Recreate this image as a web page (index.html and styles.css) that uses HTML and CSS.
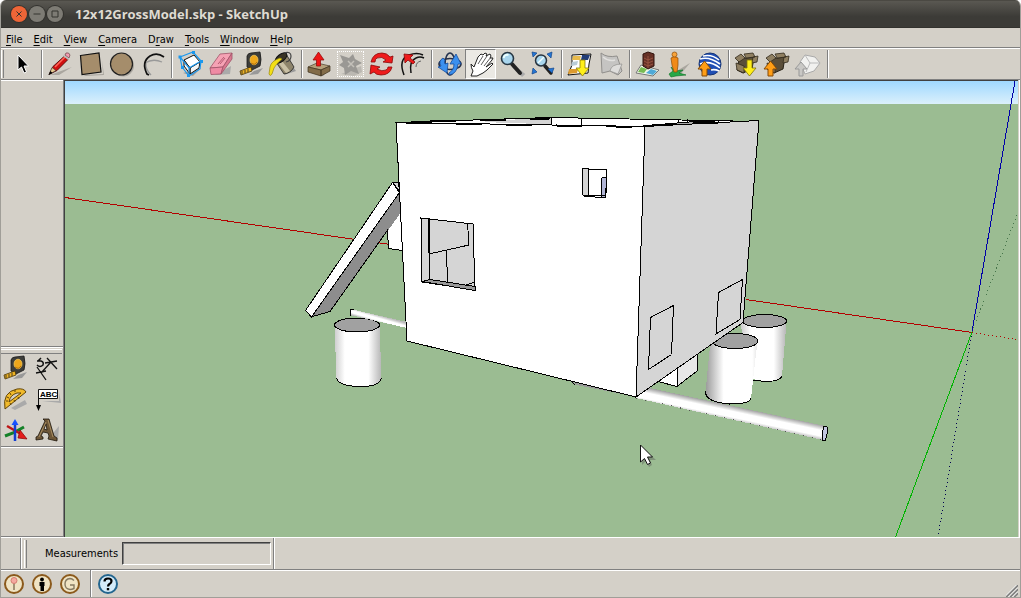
FILE: index.html
```html
<!DOCTYPE html>
<html lang="en">
<head>
<meta charset="utf-8">
<title>12x12GrossModel.skp - SketchUp</title>
<link rel="stylesheet" href="styles.css">
</head>
<body>
<div class="window">
<header class="titlebar">
  <button class="winbtn close" aria-label="Close"><svg width="16" height="16" viewBox="0 0 16 16"><path d="M5.500 5.500l5 5M10.500 5.500l-5 5"/></svg></button>
  <button class="winbtn" aria-label="Minimize"><svg width="16" height="16" viewBox="0 0 16 16"><path d="M4.500 8h7"/></svg></button>
  <button class="winbtn" aria-label="Maximize"><svg width="16" height="16" viewBox="0 0 16 16"><path d="M5 5h6v6H5z"/></svg></button>
  <h1 class="title">12x12GrossModel.skp - SketchUp</h1>
</header>
<nav class="menubar">
  <button><u>F</u>ile</button><button><u>E</u>dit</button><button><u>V</u>iew</button><button><u>C</u>amera</button><button>D<u>r</u>aw</button><button><u>T</u>ools</button><button><u>W</u>indow</button><button><u>H</u>elp</button>
</nav>
<div class="toolbar">
  <span class="grip"></span>
  <button class="tool" aria-label="Select"><svg viewBox="7 49 31 30"><path d="M18 55v15l3.500-3 2.500 6 2.500-1-2.500-6h4.500z" fill="#000" stroke="#fff"/></svg></button>
  <span class="sep"></span>
  <button class="tool" aria-label="Line"><svg viewBox="44 49 31 30"><path d="M50 75l22-8-13 8z" fill="#aaa69f"/><path d="M49 74.500l4-8 11-10 4 3-11 11z" fill="#d01010" stroke="#400" stroke-width=".8"/><path d="M55 67l10-10" stroke="#ff6a5c" stroke-width="1.500"/><path d="M49 74.500l3-7 4 3z" fill="#e8c890" stroke="#333" stroke-width=".6"/><path d="M48.500 75l2-4 2 2z"/><path d="M65 55l1-2q3-1 4 2l-1 3z" fill="#f29bb0" stroke="#644" stroke-width=".7"/><path d="M63.500 55.500l5 4" stroke="#bbb" stroke-width="1.500"/></svg></button>
  <button class="tool" aria-label="Rectangle"><svg viewBox="44 49 31 30"><path d="M52 75l20-1-1-14 2 15-18 1z" fill="#aaa69f"/><path d="M49.500 55.500l18.500-2.500 2 19-19 2.500z" fill="#a58d6b" stroke="#111" stroke-width="1.200"/></svg></button>
  <button class="tool" aria-label="Circle"><svg viewBox="44 49 31 30"><circle cx="61" cy="65.500" r="11" fill="#aaa69f"/><circle cx="59.500" cy="64" r="11" fill="#a58d6b" stroke="#222" stroke-width="1.200"/></svg></button>
  <button class="tool" aria-label="Arc"><svg viewBox="44 49 31 30"><path d="M52 63q8-5 17-1M53 63q-1 6 5 12" fill="none" stroke="#999" stroke-width="1.300"/><path d="M71 57q-7-5-14-1-9 6-3 18l2 1" fill="none" stroke="#111" stroke-width="1.700"/></svg></button>
  <span class="sep"></span>
  <button class="tool" aria-label="Make component"><svg viewBox="174 49 31 30"><path d="M183 73l18-5-8 8z" fill="#999"/><path d="M184 60l10-5 6 7-10 6z" fill="#fff" stroke="#111"/><path d="M184 60l6 8v6l-6-8zM190 68l10-6-1 6-9 6z" fill="#f5f5f5" stroke="#111"/><path d="M180 57l13-5 8 9-1 8-11 7-7-9zM180 57l9 11 12-7M189 68v8" fill="none" stroke="#1c98ee" stroke-width="1.200"/><path d="M178.500 55.500h3v3h-3zM192 51h3v3h-3zM200 60h3v3h-3zM187 74h3v3h-3zM181 66h3v3h-3z" fill="#1c98ee"/></svg></button>
  <button class="tool" aria-label="Eraser"><svg viewBox="174 49 31 30"><path d="M184 75l15-1 1-8z" fill="#aaa"/><path d="M179 68l10-14 12-1-9 14z" fill="#f5a2b4" stroke="#a05468" stroke-width=".8"/><path d="M179 68l13-1-2 7-10 .5z" fill="#ef8ba4" stroke="#a05468" stroke-width=".8"/><path d="M192 67l9-14v6l-11 15z" fill="#da7890" stroke="#a05468" stroke-width=".8"/><path d="M187 64l6-7M189 64l5-6" stroke="#b75a72"/></svg></button>
  <button class="tool" aria-label="Tape measure"><svg viewBox="174 49 31 30"><g id="tape"><path d="M192 71l9-3-5 6-9 1z" fill="#999"/><path d="M185 67V56q1-3 4-3l9-1q2 8 0 14l-8 4z" fill="#3d3d3a" stroke="#191919" stroke-width=".8"/><ellipse cx="192" cy="60" rx="4" ry="4.800" fill="#eda61b" stroke="#f5cf62" stroke-width=".7"/><path d="M189 63q4 3 6-1" stroke="#aa6a0a" fill="none"/><path d="M190 71l-11 4-1-4 11-4z" fill="#efb424" stroke="#473407" stroke-width=".8"/><path d="M180 71v3m3-4v3m3-4v3" stroke="#222" stroke-width=".8"/></g></svg></button>
  <button class="tool" aria-label="Paint bucket"><svg viewBox="174 49 31 30"><path d="M191 75l12-4-3-4z" fill="#999"/><path d="M183 62l10-8 8 13q-3 6-10 7z" fill="#8e846b" stroke="#222" stroke-width=".8"/><path d="M186 64l7 9 4-2-8-10z" fill="#c9c0a5"/><ellipse cx="188" cy="58" rx="7" ry="3.500" transform="rotate(-38 188 58)" fill="#393325" stroke="#111"/><path d="M191 53q7-2 7 3t-5 6" fill="none" stroke="#444" stroke-width="1.200"/><path d="M187 58q-9 3-10 9l-1 7q1 3 3 0l2-6q2-4 8-9z" fill="#f3df16" stroke="#9b8811" stroke-width=".7"/></svg></button>
  <span class="sep"></span>
  <button class="tool" aria-label="Push/Pull"><svg viewBox="304 49 31 30"><path d="M313 73l17-6-7 9z" fill="#999"/><path d="M308 67l9-4 13 3-9 4z" fill="#b4a17c" stroke="#4a3d29" stroke-width=".7"/><path d="M308 67l13 3v6l-13-4zM321 70l9-4v5l-9 5z" fill="#826c49" stroke="#3c301e" stroke-width=".7"/><path d="M316.500 66v-6h-3.500l5.500-8 5.500 8h-3.500v6z" fill="#ee1616" stroke="#8d0606" stroke-width=".7"/></svg></button>
  <button class="tool ghosted" aria-label="Move" disabled><svg viewBox="335 49 31 30"><path d="M341 74l20-8 1 6-8 4z" fill="#bbb8b2"/><path d="M340 55l9 3 4-4 2 5 7 4-6 3 3 8-8-3-6 4-1-7-5-3 4-3z" fill="#9a9894"/><path d="M348 61l6 6m0-6l-6 6" stroke="#c4c1ba" stroke-width="1.500"/></svg></button>
  <button class="tool" aria-label="Rotate"><svg viewBox="366 49 31 30"><path d="M371 62q2-9 11-9 5 0 8 4l3-1-1 7-9-1 3-2q-4-4-9-2-2 1-2 4z" fill="#ee1b1b" stroke="#8a0808" stroke-width=".8"/><path d="M392 67q-2 8-11 8-5 0-7-3l-4 2 1-9 9 2-3 2q5 3 9 1 2-1 2-3z" fill="#ee1b1b" stroke="#8a0808" stroke-width=".8"/></svg></button>
  <button class="tool" aria-label="Offset"><svg viewBox="397 49 31 30"><path d="M404 75q-6-16 5-20 8-3 14 0M411 73q-2-12 5-15 4-2 8 0" fill="none" stroke="#111" stroke-width="1.500"/><path d="M416 67q0-5 5-6" fill="none" stroke="#666"/><path d="M413 64l-5-4-3 3-1-9 9 1-3 3 5 4z" fill="#ee1b1b" stroke="#8a0808" stroke-width=".8"/></svg></button>
  <span class="sep"></span>
  <button class="tool" aria-label="Orbit"><svg viewBox="434 49 31 30"><ellipse cx="450" cy="64" rx="5" ry="11" fill="none" stroke="#25334e" stroke-width="1.600"/><ellipse cx="450" cy="64" rx="11" ry="5.500" fill="none" stroke="#273047" stroke-width="1.600"/><path d="M443 58q-5 3-2 8l-3 1 9 6 1-10-3 1q-1-2 0-4zM449 75q8-1 9-11h3l-5-10-6 10h4q0 6-5 9z" fill="#3c90ee" stroke="#174b9b" stroke-width=".8"/></svg></button>
  <button class="tool pressed" aria-label="Pan" aria-pressed="true"><svg viewBox="466 49 31 30"><path d="M472 76l2-5q-2-3-2-7l3 3 4-10 3-3 2 1 2-2 2 1-1 2 4-2 1 2-1 2 3 0-1 2-6 7 6-4 1 1-6 6-4 3-6 3z" fill="#fff" stroke="#222"/><path d="M484 56l-5 8m9-8l-6 9m10-8l-7 9" fill="none" stroke="#333" stroke-width=".8"/></svg></button>
  <button class="tool" aria-label="Zoom"><svg viewBox="496 49 31 30"><path d="M513 66l10 8-2 2" stroke="#aaa" stroke-width="3" fill="none"/><path d="M512 64l8 9" stroke="#222" stroke-width="4" stroke-linecap="round"/><circle cx="507.500" cy="58.500" r="6" fill="#a8d5ed" stroke="#273743" stroke-width="1.600"/><path d="M503.500 58q1-4 5-3" stroke="#eaffff" stroke-width="2" fill="none"/></svg></button>
  <button class="tool" aria-label="Zoom extents"><svg viewBox="527 49 31 30"><path d="M545 66l6 7" stroke="#222" stroke-width="3.500" stroke-linecap="round"/><circle cx="541" cy="60.500" r="5.500" fill="#a8d5ed" stroke="#27333f" stroke-width="1.500"/><path d="M538 63l6-6" stroke="#f3ffff" stroke-width="1.500"/><path d="M532 52l5 1-4 4zM552 52l-5 2 4 4zM532 74l1-6 4 4zM554 68l-6 1 4 4z" fill="#2475d4" stroke="#15468a" stroke-width=".7"/></svg></button>
  <span class="sep"></span>
  <button class="tool" aria-label="Get current view"><svg viewBox="564 49 31 30"><path d="M572 55l19-1-2 10-1 9-20 2 4-10z" fill="#fff" stroke="#111"/><path d="M573 56h8l-1 4h-8z" fill="#e8ba4c"/><path d="M582 55h8l-2 5h-7z" fill="#243e78"/><path d="M572 62l6-1-1 4-6 1z" fill="#b9cbd5"/><path d="M569 69h9l-1 4-9 1z" fill="#dc9a2f"/><path d="M580 60h5v8h4l-6.500 8-6.500-8h4z" fill="#ffef19" stroke="#8a7b07" stroke-width=".8"/></svg></button>
  <button class="tool" aria-label="Toggle terrain"><svg viewBox="595 49 31 30"><path d="M601 53q6 5 16 3l5 15-4 4-8-4-8 2z" fill="#c5c4c2" stroke="#918f8c"/><path d="M610 71q1-7 12-7l-4 10z" fill="#dedddb" stroke="#918f8c" stroke-width=".7"/><path d="M603 57q6 5 12 3" fill="none" stroke="#e2e1df" stroke-width="1.500"/></svg></button>
  <span class="sep"></span>
  <button class="tool" aria-label="Add new building"><svg viewBox="632 49 31 30"><path d="M636 73l5-8 18 5-6 6z" fill="#eef6e7" stroke="#777"/><path d="M638 72l3-5 6 2-3 4z" fill="#77bb51"/><path d="M646 73l5-4 6 2-4 4z" fill="#50a9d7"/><path d="M643 54l5-2 6 2v12l-6 3-5-3z" fill="#663126" stroke="#32140e"/><path d="M648 56v12m-4-10l4 2 5-2m-9 3l4 2 5-2m-9 3l4 2 5-2" fill="none" stroke="#a35a46" stroke-width=".8"/></svg></button>
  <button class="tool" aria-label="Photo textures"><svg viewBox="663 49 31 30"><path d="M675 72l15-9-10 12z" fill="#aaa69f"/><path d="M669 74l4-3-2-4 5 4 7-1-4 3 7 2-10 1-5 1z" fill="#27a847" stroke="#087021" stroke-width=".6"/><path d="M671 58q3-3 7 0v7l-1 7h-3l-2-7z" fill="#f08a18" stroke="#8d4a08" stroke-width=".7"/><circle cx="674.500" cy="54.500" r="2.500" fill="#f7a43c" stroke="#8d4a08" stroke-width=".7"/></svg></button>
  <button class="tool" aria-label="Preview in Google Earth"><svg viewBox="694 49 31 30"><circle cx="710" cy="64" r="11" fill="#204eb3" stroke="#173575"/><path d="M700 59q9-3 20 5M703 56q9-2 16 4M700 64q10-4 20 4M711 70q4-1 8 1" fill="none" stroke="#fff" stroke-width="1.600"/><path d="M702 76v-7h-4l6.500-8 6.500 8h-4v7z" fill="#ff9e16" stroke="#854b08"/></svg></button>
  <span class="sep"></span>
  <button class="tool" aria-label="Get models"><svg viewBox="731 49 31 30"><g id="box"><path d="M739 59l15-2-2 12-9 4-6-3z" fill="#5a4e39" stroke="#292317"/><path d="M735 58l6-4 4 4-6 4zM744 54l9-1 2 4-9 1zM753 57l5-1-1 6-5 1zM736 63l8 3v7l-7-3z" fill="#8f7f61" stroke="#312a1c" stroke-width=".8"/></g><path d="M747 60h5v8h4l-6.500 8-6.500-8h4z" fill="#ffee18" stroke="#81740a" stroke-width=".8"/></svg></button>
  <button class="tool" aria-label="Share model"><svg viewBox="731 49 31 30"><use href="#box"/><path d="M737 76v-7h-4l6.500-8 6.500 8h-4v7z" fill="#ff9e16" stroke="#854b08"/></svg></button>
  <button class="tool" aria-label="Share component"><svg viewBox="731 49 31 30"><path d="M738 62l5-7 10 2 5 6-6 8-9 3z" fill="#f1f1ef" stroke="#aaa"/><path d="M743 55l5 8 10 0M748 63l-4 9" fill="none" stroke="#bbb"/><path d="M737 76v-7h-4l6-7 6 7h-4v7z" fill="#c9c8c5" stroke="#999"/></svg></button>
  <span class="sep"></span>
</div>
<main class="workspace">
  <aside class="side">
    <div class="dock dock-top"></div>
    <div class="toolset">
      <button class="tool" aria-label="Tape measure tool"><svg viewBox="175 49 31 30"><use href="#tape"/></svg></button>
      <button class="tool" aria-label="Dimensions"><svg viewBox="32 353 31 30"><path d="M41 373l10-11M36 373l10-2M37 367l9 13M45 363l12-2M47 358l10 11" fill="none" stroke="#111" stroke-width="1.300"/><path d="M37 361h4q3 1 2 4-3 3-6 0M38 361l3-3" fill="none" stroke="#111" stroke-width="1.500"/></svg></button>
      <button class="tool" aria-label="Protractor"><svg viewBox="1 384 31 30"><path d="M11 408l14-8 2 4-12 6z" fill="#aaa"/><path fill-rule="evenodd" d="M5 409q-3-17 12-20 7-1 9 3zM9 402q1-7 8-9h4z" fill="#f1ba2b" stroke="#61450a"/><path d="M6 401h2m-1-4l2 1m1-5l1 2m4-5v2m-5 11l1 2m3-5l1 2m3-5l1 2" stroke="#61450a"/></svg></button>
      <button class="tool" aria-label="Text"><svg viewBox="32 384 31 30"><path d="M42 401h17v-9l2 11z" fill="#aaa"/><path d="M38.500 389.500h19v9h-19z" fill="#fff" stroke="#111"/><path d="M38.500 398v8" stroke="#111"/><path d="M36 405h5l-2.500 6z"/><text x="40" y="397" class="abc">ABC</text></svg></button>
      <button class="tool" aria-label="Axes"><svg viewBox="1 415 31 30"><path d="M5 436l8-3 11-6" stroke="#148128" stroke-width="3" fill="none"/><path d="M7 426l14 8" stroke="#bd1515" stroke-width="2.500"/><path d="M20 430l7 9-9-1z" fill="#e31c1c" stroke="#800" stroke-width=".7"/><path d="M15 441v-17" stroke="#143ed0" stroke-width="2.500"/><path d="M11.500 425l3.500-6 3.500 6z" fill="#1751ff"/></svg></button>
      <button class="tool" aria-label="3D text"><svg viewBox="32 415 31 30"><path d="M49 438l10-12-1 14z" fill="#aaa"/><path fill-rule="evenodd" d="M36 437l2-1 7-15-2-2h6l5 17 3 2v3l-9-2 1-3-1-3-5-1-2 4 2 1v2l-7 1zM44 429l3 1-1-6z" fill="#6d5637" stroke="#1e170d" stroke-width=".8"/><path d="M46 422l-7 15m9-17l5 17" stroke="#a78c61"/></svg></button>
    </div>
    <div class="dock dock-bottom"></div>
  </aside>
  <svg class="scene" viewBox="65 81 953 456" preserveAspectRatio="xMidYMid slice" role="img" aria-label="3D model of a house">
    <defs>
      <linearGradient id="sky" x2="0" y2="1"><stop offset="0" stop-color="#9fd8ff"/><stop offset="1" stop-color="#dbf0fb"/></linearGradient>
      <linearGradient id="drum"><stop offset="0" stop-color="#ccc"/><stop offset=".22" stop-color="#fff"/><stop offset=".72" stop-color="#fff"/><stop offset="1" stop-color="#b5b5b5"/></linearGradient>
      <linearGradient id="drum2"><stop offset="0" stop-color="#999"/><stop offset=".35" stop-color="#fff"/><stop offset=".9" stop-color="#fff"/><stop offset="1" stop-color="#e4e4e4"/></linearGradient>
      <linearGradient id="pipe" gradientUnits="userSpaceOnUse" x1="735" y1="406" x2="732" y2="420"><stop offset="0" stop-color="#999"/><stop offset=".4" stop-color="#fff"/><stop offset=".8" stop-color="#fff"/><stop offset="1" stop-color="#ccc"/></linearGradient>
      <linearGradient id="pipe2" gradientUnits="userSpaceOnUse" x1="378" y1="315" x2="376" y2="322"><stop offset="0" stop-color="#bbb"/><stop offset=".4" stop-color="#fff"/><stop offset=".7" stop-color="#fff"/><stop offset="1" stop-color="#bbb"/></linearGradient>
    </defs>
    <path d="M65 81h953v456H65z" fill="#9bbc92"/>
    <path d="M65 81h953v23H65z" fill="url(#sky)"/>
    <g fill="none" shape-rendering="crispEdges">
      <path d="M65 197.500L390 244.500M746 299.500l226 33" stroke="#b40000"/>
      <path d="M972 332.500l46 7" stroke="#b40000" stroke-dasharray="1 3"/>
      <path d="M972 332L1015 81" stroke="#0000a8"/>
      <path d="M972 332L938 537" stroke="#000050" stroke-dasharray="1 3"/>
      <path d="M972 332L895.500 537" stroke="#00b400"/>
      <path d="M972 332l46-120" stroke="#46744a" stroke-dasharray="1 3"/>
    </g>
    <g class="edges">
      <path d="M388 225l12-14 2 39-14-2z" fill="#fff" stroke="none"/><path d="M387.500 230l1 18.500 14 2" fill="none"/>
      <path d="M393 183l5-1 2 10z" fill="#d5d5d5"/>
      <path d="M399.500 192l1 21L330 311.500l-19.500 5.500z" fill="#8d8d8d" stroke="none"/>
      <path d="M388 229.500l-58 82-19.500 5.500" fill="none"/>
      <path d="M392.500 182.500l7 10-88 124.500-6-6.500z" fill="#fff"/>
      <path d="M334.500 325l2 53q2 8 22.500 8.500t22.500-8.500l-2-53z" fill="url(#drum)" stroke="none"/>
      <path d="M336.500 378q2 8 22.500 8.500t22.500-8.500" fill="none"/>
      <ellipse cx="357" cy="325" rx="22.500" ry="7" fill="#a1a1a1"/>
      <path d="M350 309l57 13v6l-57-13z" fill="url(#pipe2)" stroke="none"/><path d="M354 309.500h-3q-2 2 0 6" fill="none"/>
      <path d="M741 323l4 50q4 8 22 8 14 0 15-5l4.500-54z" fill="url(#drum)" stroke="none"/><path d="M752 380q27 4 30-4" fill="none"/>
      <ellipse cx="764.500" cy="321" rx="22" ry="6.500" fill="#a1a1a1"/>
      <path d="M656 381l21 5.500V360z" fill="#fff"/><path d="M677.500 386l19.500-15v-20l-19.500 12z" fill="#e7e7e7"/>
      <path d="M710.500 341l-5 51q-1 11 24 12 20 0 21.500-6l6.500-57z" fill="url(#drum2)" stroke="none"/><path d="M705.500 391q-1 11 24 13 21 0 21.500-6" fill="none"/>
      <ellipse cx="735" cy="341" rx="23" ry="7.500" fill="#a1a1a1"/>
      <path d="M645 387l180 39-2 14-187-42z" fill="url(#pipe)" stroke="none"/><path d="M636 398l187 42" fill="none" stroke="#555" stroke-dasharray="1 8"/>
      <path d="M824 426.500h3q1 9-2 14h-2q-1-9 1-14z" fill="#c3c7e0"/>
      <path d="M572 382l5 3 59 12z" fill="#999" stroke="none"/><path d="M572 382.500l3 2" fill="none"/>
      <path d="M396 122.500l155-5 208 4-114 5.500z" fill="#fff"/>
      <path d="M480 121l71-3v6l-50-1z" fill="#d5d5d5" stroke="none"/>
      <path d="M551.500 118v7M581.500 119v6M678.500 119v5M687.500 119v4" fill="none"/>
      <path d="M665 124l24-2 26-1-20 3z" fill="#aaa"/>
      <path d="M396 122.500l249 4-9 270.500-229-56z" fill="#fff"/>
      <path d="M645 126.500l114-6-16 202-107 74.500z" fill="#d5d5d5"/>
      <path d="M406 123l240 4M430 121.500l120-3M643 126l38-2 50-2" fill="none" stroke-width="2" stroke-dasharray="26 24"/>
      <path d="M421 218l52 6 2 66-53-8z" fill="#d5d5d5"/>
      <path d="M422 281.500l8-2 45 7v4z" fill="#999"/><path d="M465 285.500l10-3.500" fill="none"/>
      <path d="M429 219l1 61M429 254l40-9-1.500-22M446.500 250.500l1 32" fill="none"/><path d="M428.500 219v34" fill="none" stroke-width="2"/>
      <path d="M582.500 168.500l6 0 1 1h17v19l-1 9.500-22-2z" fill="#fff"/><path d="M582.500 168.500h6v27l-6-.5z" fill="#d5d5d5"/><path d="M601 179l2-2h3v11l-1 9h-4z" fill="#b1b5d6"/><path d="M583 195.500h22" fill="none"/>
      <path d="M650.500 317.500l23-12-2 49-23 15zM718.500 292.500l24-13-2.500 40-24 14.500z" fill="none"/>
    </g>
    <path d="M642 447v18l4-4 3 6 3-2-2-5h6z" fill="#555" opacity=".4"/>
    <path d="M640.500 445v17l4-3.500 3 6 3-1.500-3-6h5z" fill="#fff" stroke="#111"/>
  </svg>
</main>
<form class="measurebar">
  <span class="stub"></span>
  <div class="measure"><span class="grip"></span><label for="vcb">Measurements</label><input id="vcb" type="text"></div>
</form>
<footer class="statusbar">
  <button class="status" aria-label="Geo-location"><svg viewBox="0 0 22 22"><circle class="coin" cx="11" cy="11" r="9"/><path d="M11 10v7" stroke="#8a785d" stroke-width="1.500"/><circle cx="11" cy="7.500" r="3" fill="#f5aaa0" stroke="#d57f72"/></svg></button>
  <button class="status" aria-label="Credits"><svg viewBox="0 0 22 22"><circle class="coin" cx="11" cy="11" r="9"/><circle cx="11" cy="6.500" r="1.900"/><path d="M8.500 9h5v4H13v5H9.500v-5h-1z"/></svg></button>
  <button class="status" aria-label="Sign in"><svg viewBox="0 0 22 22"><circle class="coin" cx="11" cy="11" r="9"/><path d="M15 7.500q-2-2-4-2-5 .5-5 5.500t5 5.500q2 0 4-1V12h-4" fill="none" stroke="#857a62" stroke-width="1.400"/></svg></button>
  <span class="sep"></span>
  <button class="status" aria-label="Help"><svg viewBox="0 0 22 22"><circle cx="11" cy="11" r="9" fill="#d5ecfa" stroke="#23658e" stroke-width="2"/><path d="M7.500 8.500q0-3 3.500-3t3.500 2.500q0 2-2 3-1.500 1-1.500 2.500" fill="none" stroke="#000" stroke-width="2.200"/><path d="M9.800 15h2.400v2.300H9.800z"/></svg></button>
  <svg class="resize" viewBox="0 0 12 12"><path d="M0 12L12 0M4 12l8-8M8 12l4-4" stroke="#808080" stroke-width="2"/><path d="M-1.500 12L12-1.500M2.500 12L12 2.500M6.500 12L12 6.500" stroke="#fff"/></svg>
</footer>
</div>
</body>
</html>
```
FILE: styles.css
```css
* { box-sizing: border-box; }
body { margin: 0; background: #fff; color: #000; font: 11px/15px "DejaVu Sans Condensed", "Liberation Sans", sans-serif; }
button { margin: 0; padding: 0; border: 0; background: none; font: inherit; color: inherit; }
svg { display: block; }
.window { display: flex; flex-direction: column; height: 100vh; background: #d4d0c8; border: 1px solid #a09e98; border-top: 0; border-radius: 6px 6px 0 0; overflow: hidden; }
.titlebar { display: flex; align-items: center; gap: 2px; height: 28px; flex: none; padding: 0 10px; background: linear-gradient(#5a5852, #3c3b37 60%); border-top: 1px solid #4b4943; border-bottom: 1px solid #33322e; }
.winbtn { width: 16px; height: 16px; border-radius: 50%; background: #7d7b74; box-shadow: 0 0 0 1px #33322e; }
.winbtn svg { fill: none; stroke: #35342f; stroke-width: 1; }
.winbtn.close { background: #ee6537; }
.title { margin: 0 0 0 10px; font: bold 13px/18px "Open Sans", "Noto Sans", sans-serif; color: #dfdbd2; white-space: nowrap; }
.menubar { display: flex; align-items: center; gap: 11px; height: 20px; flex: none; padding: 3px 5px 0; border-bottom: 1px solid #808080; }
.menubar u { text-underline-offset: 2px; }
.toolbar { display: flex; align-items: center; height: 32px; flex: none; border-top: 1px solid #fff; border-bottom: 1px solid #808080; }
.grip { flex: none; width: 3px; height: 28px; margin-right: 3px; border-left: 1px solid #fff; border-right: 1px solid #808080; }
.tool { flex: none; width: 31px; height: 30px; }
.tool svg { width: 31px; height: 30px; }
.tool.pressed { background: #ebe9e4; border: 1px solid; border-color: #808080 #fff #fff #808080; }
.tool.pressed svg { margin: -1px; }
.tool.ghosted svg { outline: 1px dotted #fff; outline-offset: -3px; }
.sep { flex: none; width: 6px; height: 28px; background: linear-gradient(90deg, transparent 3px, #808080 3px, #808080 4px, #fff 4px, #fff 5px, transparent 5px); }
.workspace { display: flex; flex: 1; min-height: 0; padding-right: 1px; border-right: 1px solid #fff; }
.side { display: flex; flex-direction: column; flex: none; width: 63px; border-right: 1px solid #808080; }
.dock { border-top: 1px solid #fff; border-bottom: 1px solid #808080; }
.dock-top { flex: 3 1 0; }
.dock-bottom { flex: 1 1 0; }
.toolset { display: grid; grid-template-columns: 31px 31px; grid-template-rows: 5px; grid-auto-rows: 31px; border-top: 1px solid #fff; border-bottom: 1px solid #808080; }
.toolset::before { content: ""; grid-column: 1 / -1; height: 3px; margin: 1px 1px 1px 0; border-top: 1px solid #fff; border-bottom: 1px solid #808080; }
.abc { font: bold 8px/8px "Liberation Sans", sans-serif; }
.scene { flex: 1; min-width: 0; height: 100%; border-left: 1px solid #404040; border-top: 1px solid #404040; }
.edges { stroke: #000; stroke-width: 1; shape-rendering: crispEdges; }
.measurebar { display: flex; flex: none; height: 33px; border-top: 1px solid #fff; border-bottom: 1px solid #808080; }
.stub { width: 20px; border-right: 1px solid #808080; }
.measure { display: flex; align-items: center; padding: 0 2px; border-left: 1px solid #fff; border-right: 1px solid #808080; box-shadow: 1px 0 #fff; }
.measure label { margin: 0 4px 0 15px; }
.measure input { width: 149px; height: 23px; padding: 2px; font: inherit; background: #d4d0c8; border: 1px solid; border-color: #404040 #fff #fff #404040; box-shadow: inset 1px 1px #808080; }
.statusbar { display: flex; align-items: center; gap: 6px; height: 27px; flex: none; padding: 0 2px; border-top: 1px solid #fff; }
.statusbar .sep { margin-right: -2px; }
.status { width: 22px; height: 22px; }
.coin { fill: #f0e4c4; stroke: #8b5a1c; stroke-width: 2; }
.resize { width: 12px; height: 12px; margin-left: auto; align-self: flex-end; }
```
